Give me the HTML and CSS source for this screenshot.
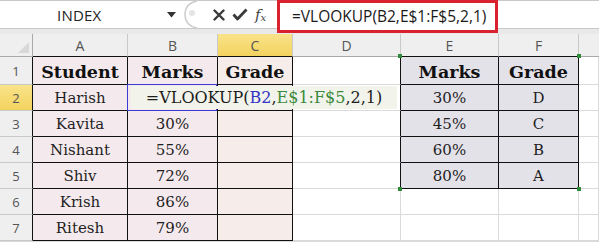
FILE: index.html
```html
<!DOCTYPE html>
<html>
<head>
<meta charset="utf-8">
<link rel="stylesheet" href="styles.css">
</head>
<body>
<div class="bar">
  <div class="namebox">
    <span class="name">INDEX</span>
    <svg class="arrow" width="9" height="6" viewBox="0 0 9 6"><path d="M0 0 H9 L4.5 5.5 Z" fill="#333"/></svg>
  </div>
  <div class="tools">
    <svg class="sep" width="22" height="29" viewBox="0 0 22 29"><path d="M14 1 C4 3 2 9 2 14.5 C2 20 4 26 14 28" fill="none" stroke="#cfcfcf" stroke-width="1.5"/><circle cx="9" cy="13" r="3" fill="#e4e4e4"/></svg>
    <svg class="ico" width="12" height="12" viewBox="0 0 12 12"><path d="M1.5 1.5 L10.5 10.5 M10.5 1.5 L1.5 10.5" stroke="#3a3a3a" stroke-width="2.4" stroke-linecap="round"/></svg>
    <svg class="ico" width="16" height="13" viewBox="0 0 16 13"><path d="M1.5 6.5 L5.5 11 L14.5 1.5" fill="none" stroke="#3a3a3a" stroke-width="2.8" stroke-linejoin="round"/></svg>
    <span class="fx">f<sub>x</sub></span>
  </div>
  <div class="fbox">=VLOOKUP(B2,E$1:F$5,2,1)</div>
  <div class="rest"></div>
</div>
<div class="sheet">
  <div class="h corner"><span class="tri"></span></div>
  <div class="h col bb">A</div>
  <div class="h col bb">B</div>
  <div class="h col sel bb">C</div>
  <div class="h col">D</div>
  <div class="h col bb">E</div>
  <div class="h col bb">F</div>
  <div class="h col last"></div>

  <div class="h row rb">1</div>
  <div class="c t p hd">Student</div>
  <div class="c t p hd">Marks</div>
  <div class="c t pc hd">Grade</div>
  <div class="c rb"></div>
  <div class="c t g hd"><span class="gc tl"></span>Marks</div>
  <div class="c t g hd"><span class="gc tr"></span>Grade</div>
  <div class="c"></div>

  <div class="h row rb sel">2</div>
  <div class="c t p">Harish</div>
  <div class="c t p ref"><span class="blue"></span></div>
  <div class="c t pc edit"><span class="overlay">=VLOOKUP(<span class="b">B2</span>,<span class="gr">E$1:F$5</span>,2,1)</span></div>
  <div class="c rb"></div>
  <div class="c t g">30%</div>
  <div class="c t g">D</div>
  <div class="c"></div>

  <div class="h row rb">3</div>
  <div class="c t p">Kavita</div>
  <div class="c t p">30%</div>
  <div class="c t pc"></div>
  <div class="c rb"></div>
  <div class="c t g">45%</div>
  <div class="c t g">C</div>
  <div class="c"></div>

  <div class="h row rb">4</div>
  <div class="c t p">Nishant</div>
  <div class="c t p">55%</div>
  <div class="c t pc"></div>
  <div class="c rb"></div>
  <div class="c t g">60%</div>
  <div class="c t g">B</div>
  <div class="c"></div>

  <div class="h row rb">5</div>
  <div class="c t p">Shiv</div>
  <div class="c t p">72%</div>
  <div class="c t pc"></div>
  <div class="c rb"></div>
  <div class="c t g"><span class="gc bl"></span>80%</div>
  <div class="c t g"><span class="gc br"></span>A</div>
  <div class="c"></div>

  <div class="h row rb">6</div>
  <div class="c t p">Krish</div>
  <div class="c t p">86%</div>
  <div class="c t pc"></div>
  <div class="c"></div>
  <div class="c"></div>
  <div class="c"></div>
  <div class="c"></div>

  <div class="h row rb">7</div>
  <div class="c t p">Ritesh</div>
  <div class="c t p">79%</div>
  <div class="c t pc"></div>
  <div class="c"></div>
  <div class="c"></div>
  <div class="c"></div>
  <div class="c"></div>
</div>
</body>
</html>
```
FILE: styles.css
```css
* { box-sizing: border-box; }
html, body { margin: 0; padding: 0; background: #fff; overflow: hidden; }
body { width: 599px; height: 244px; font-family: "Open Sans", sans-serif; }

.bar {
  height: 34px;
  background: #e9e9e9;
  display: flex;
  align-items: flex-start;
}
.namebox, .tools, .rest {
  height: 29px;
  background: #fff;
  border-top: 1px solid #c9c9c9;
  border-bottom: 1px solid #c9c9c9;
}
.namebox {
  width: 183px;
  display: flex;
  align-items: center;
  position: relative;
}
.name {
  font-size: 15px;
  color: #222;
  margin-left: 57px;
  letter-spacing: 0.2px;
}
.arrow { margin-left: 66px; margin-top: 1px; }
.tools {
  width: 94px;
  display: flex;
  align-items: center;
}
.sep { margin-left: 0; }
.ico { margin-left: 8px; }
.ico + .ico { margin-left: 7px; }
.fx {
  font-family: "DejaVu Serif", serif;
  font-style: italic;
  font-size: 15px;
  color: #444;
  margin-left: 7px;
}
.fx sub { font-size: 10px; vertical-align: -1px; }
.fbox {
  width: 221px;
  height: 33px;
  background: #fff;
  border: 3px solid #d8232f;
  font-size: 15.5px;
  color: #1a1a1a;
  padding-left: 12px;
  line-height: 26px;
  white-space: nowrap;
}
.rest { flex: 1; }

.sheet {
  display: grid;
  grid-template-columns: 33px 95px 90px 75px 108px 98px 80px 1fr;
  grid-template-rows: 23px 28px repeat(6, 26px);
  border-bottom: 1px solid #dadada;
}
.h {
  background: #efefef;
  color: #555;
  font-size: 14px;
  display: flex;
  align-items: center;
  justify-content: center;
  border-right: 1px solid #c9c9c9;
  border-bottom: 1px solid #c9c9c9;
}
.col { border-bottom-color: #a9a9a9; padding-top: 1px; }
.row { border-right-color: #a9a9a9; font-size: 13px; color: #555; }
.corner { border-bottom-color: #a9a9a9; border-right-color: #a9a9a9; position: relative; }
.tri {
  position: absolute;
  right: 3px;
  bottom: 3px;
  width: 0; height: 0;
  border-left: 11px solid transparent;
  border-bottom: 11px solid #d8d8d8;
}
.h.sel { background: linear-gradient(#f9e38a, #f3d35f); color: #555; }
.last { border-right: none; }

.c {
  border-right: 1px solid #dadada;
  border-bottom: 1px solid #dadada;
  font-family: "DejaVu Serif", serif;
  font-size: 15px;
  color: #1e1e1e;
  display: flex;
  align-items: center;
  justify-content: center;
  white-space: nowrap;
  position: relative;
}
.c.t { border-right-color: #111; border-bottom-color: #111; }
.rb { border-right-color: #111 !important; }
.bb { border-bottom-color: #111 !important; }
.p { background: #f4eaed; }
.pc { background: #f6ece9; }
.g { background: #e4e2e9; }
.hd { font-weight: bold; font-size: 17.5px; color: #111; padding-top: 2px; }

.blue {
  position: absolute;
  left: -1px; top: -1px; right: 0; bottom: -1px;
  border: 1px solid #3b3bd4;
  z-index: 1;
}
.edit { overflow: visible; }
.overlay {
  position: absolute;
  left: -87px;
  width: 266px;
  top: 1px;
  bottom: 1px;
  background: #f2f4ec;
  display: flex;
  align-items: center;
  justify-content: center;
  font-size: 16px;
  color: #1e1e1e;
  z-index: 2;
}
.overlay .b { color: #3434c4; }
.overlay .gr { color: #3d8a3d; }

.gc {
  position: absolute;
  width: 4px; height: 4px;
  background: #2f8a3a;
  z-index: 3;
}
.gc.tl { left: -3px; top: -3px; }
.gc.tr { right: -3px; top: -3px; }
.gc.bl { left: -3px; bottom: -3px; }
.gc.br { right: -3px; bottom: -3px; }
```
